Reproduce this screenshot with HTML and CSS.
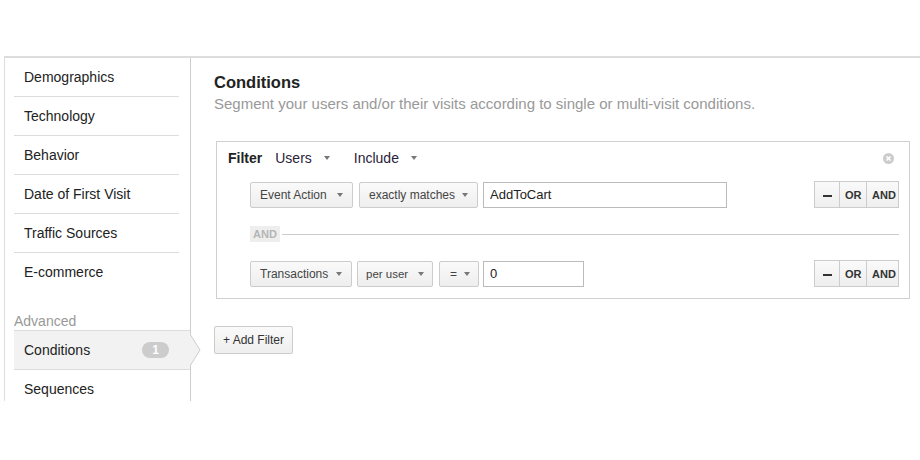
FILE: index.html
```html
<!DOCTYPE html>
<html lang="en">
<head>
    <meta charset="UTF-8">
    <title>Segment Conditions</title>
    <link rel="stylesheet" href="styles.css">
</head>
<body>
    <div class="page">
        <div class="sidebar">
            <div class="nav-item">Demographics</div>
            <div class="nav-item">Technology</div>
            <div class="nav-item">Behavior</div>
            <div class="nav-item">Date of First Visit</div>
            <div class="nav-item">Traffic Sources</div>
            <div class="nav-item last">E-commerce</div>
            <div class="nav-label">Advanced</div>
            <div class="nav-item selected">
                <span>Conditions</span>
                <span class="badge">1</span>
                <svg class="pointer" width="11" height="32" viewBox="0 0 11 32">
                    <polygon points="0,0 10,16 0,32" fill="#f2f2f2"/>
                    <polyline points="0,0 10,16 0,32" fill="none" stroke="#ccc" stroke-width="1"/>
                </svg>
            </div>
            <div class="nav-item last">Sequences</div>
        </div>

        <div class="main">
            <h2 class="title">Conditions</h2>
            <p class="subtitle">Segment your users and/or their visits according to single or multi-visit conditions.</p>

            <div class="filter-box">
                <div class="filter-head">
                    <b>Filter</b>
                    <span class="menu">Users <i class="caret"></i></span>
                    <span class="menu">Include <i class="caret"></i></span>
                    <span class="close">
                        <svg width="11" height="11" viewBox="0 0 11 11">
                            <circle cx="5.5" cy="5.5" r="5.5" fill="#ccc"/>
                            <path d="M3.5 3.5 L7.5 7.5 M7.5 3.5 L3.5 7.5" stroke="#fff" stroke-width="1.6"/>
                        </svg>
                    </span>
                </div>

                <div class="cond-row">
                    <span class="dd dd-event">Event Action <i class="caret"></i></span>
                    <span class="dd dd-match">exactly matches <i class="caret"></i></span>
                    <input class="val wide" type="text" value="AddToCart">
                    <div class="ops">
                        <button class="op minus"><i class="dash"></i></button>
                        <button class="op">OR</button>
                        <button class="op">AND</button>
                    </div>
                </div>

                <div class="and-sep">
                    <span class="and-label">AND</span>
                    <span class="and-line"></span>
                </div>

                <div class="cond-row">
                    <span class="dd dd-trans">Transactions <i class="caret"></i></span>
                    <span class="dd dd-per">per user <i class="caret"></i></span>
                    <span class="dd dd-eq">= <i class="caret"></i></span>
                    <input class="val short" type="text" value="0">
                    <div class="ops">
                        <button class="op minus"><i class="dash"></i></button>
                        <button class="op">OR</button>
                        <button class="op">AND</button>
                    </div>
                </div>
            </div>

            <button class="add-btn">+ Add Filter</button>
        </div>
    </div>
</body>
</html>
```

FILE: styles.css
```css
* { margin: 0; padding: 0; box-sizing: border-box; }
body { background: #fff; font-family: "Liberation Sans", Arial, sans-serif; color: #222; }

.page {
    display: flex; margin: 56px 0 0 4px; height: 345px; overflow: hidden;
    border-top: 2px solid #ddd;
}

.sidebar {
    width: 187px; flex-shrink: 0; border-left: 1px solid #ddd; border-right: 1px solid #ccc;
    padding-left: 9px;
}
.nav-item {
    width: 165px; height: 39px; line-height: 38px; padding-left: 10px; font-size: 14px;
    border-bottom: 1px solid #ddd;
}
.nav-item.last { border-bottom: none; }
.nav-label { margin-top: 21px; line-height: 17px; font-size: 14px; color: #999; }
.nav-item.selected {
    position: relative; width: 176px; height: 40px; display: flex; align-items: center;
    justify-content: space-between; padding-right: 21px; background: #f2f2f2;
    border-top: 1px solid #ddd;
}
.badge {
    width: 27px; height: 16px; line-height: 16px; border-radius: 8px; background: #ccc;
    color: #fff; font-size: 12px; font-weight: bold; text-align: center;
}
.pointer { position: absolute; left: 176px; top: 3px; }

.main { flex: 1; padding: 15px 10px 0 23px; }
.title { font-size: 16.5px; line-height: 18px; font-weight: bold; color: #222; }
.subtitle { margin-top: 4px; font-size: 15px; line-height: 18px; color: #999; }

.filter-box {
    margin: 28px 0 0 2px; border: 1px solid #d0d0d0; padding: 7px 10px 11px 11px;
}
.filter-head { display: flex; align-items: center; height: 18px; font-size: 14px; }
.filter-head b { margin-right: 13px; }
.menu { display: flex; align-items: center; margin-right: 24px; color: #2a2238; }
.menu .caret { margin-left: 12px; }
.close { margin-left: auto; margin-right: 5px; display: flex; }

.caret {
    display: inline-block; width: 0; height: 0; border-left: 3px solid transparent;
    border-right: 3px solid transparent; border-top: 4px solid #777;
}

.cond-row { display: flex; align-items: center; margin-top: 14px; padding-left: 22px; }
.dd {
    display: flex; align-items: center; justify-content: space-between; height: 26px;
    padding: 0 9px; margin-right: 5px; border: 1px solid #ccc; border-radius: 2px;
    font-size: 12px; color: #444; background: linear-gradient(#fafafa, #eee);
}
.dd-event { width: 103px; margin-right: 6px; }
.dd-match { width: 119px; }
.dd-trans { width: 102px; }
.dd-per { width: 76px; padding: 0 8px; font-size: 11.5px; margin-right: 6px; }
.dd-eq { width: 40px; padding: 0 8px 0 10px; margin-right: 4px; }
.val {
    height: 26px; border: 1px solid #bbb; padding: 0 6px; font-size: 13px; color: #222;
    font-family: "Liberation Sans", Arial, sans-serif;
}
.val.wide { width: 244px; }
.val.short { width: 101px; }

.ops { display: flex; margin-left: auto; }
.op {
    height: 27px; border: 1px solid #ccc; margin-left: -1px; background: linear-gradient(#fafafa, #eee);
    font-family: "Liberation Sans", Arial, sans-serif; font-size: 11px; font-weight: bold; color: #333;
    padding: 0 5px;
}
.op.minus { width: 26px; display: flex; align-items: center; justify-content: center; }
.dash { display: block; width: 9px; height: 2px; background: #333; margin-top: 2px; }
.op:nth-child(2) { width: 28px; }
.op:nth-child(3) { width: 33px; }

.and-sep { display: flex; align-items: center; margin: 18px 0 0 22px; }
.and-label {
    height: 16px; line-height: 16px; padding: 0 3px; background: #eee; color: #b5b5b5;
    font-size: 11px; font-weight: bold;
}
.and-line { flex: 1; height: 1px; background: #ccc; margin-left: 2px; }
.and-sep + .cond-row { margin-top: 18px; }

.add-btn {
    margin-top: 27px; height: 28px; padding: 0 8px; border: 1px solid #ccc; border-radius: 2px;
    background: linear-gradient(#fafafa, #eee); font-family: "Liberation Sans", Arial, sans-serif;
    font-size: 12px; color: #333;
}
```
